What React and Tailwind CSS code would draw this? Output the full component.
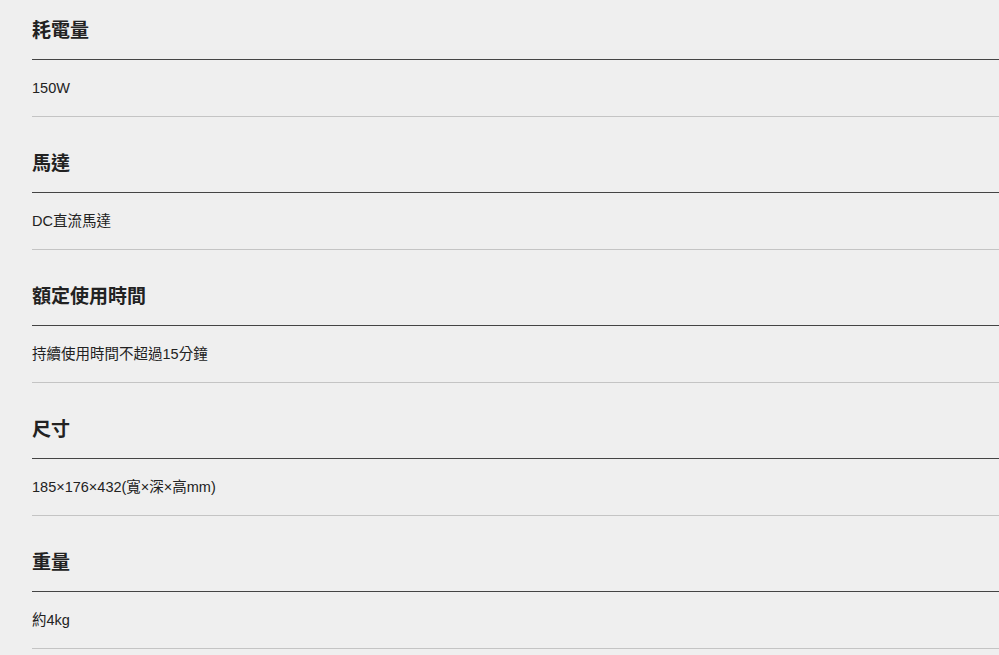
const rows = [
  ["耗電量", "150W"],
  ["馬達", "DC直流馬達"],
  ["額定使用時間", "持續使用時間不超過15分鐘"],
  ["尺寸", "185×176×432(寬×深×高mm)"],
  ["重量", "約4kg"],
];

export default function App() {
  return (
    <div className="min-h-[655px] w-full bg-[#efefef] pl-8 overflow-hidden">
      <div className="w-[1000px] mt-[-16px]">
        {rows.map(([h, v]) => (
          <div key={h} className="mt-4">
            <div
              className="pt-[15px] pb-[17px] border-b border-[#444444] text-[19px] leading-[27px] font-bold text-[#222222]"
              style={{ fontFamily: '"Noto Sans CJK TC", "Liberation Sans", sans-serif' }}
            >
              {h}
            </div>
            <div
              className="py-[19px] border-b border-[#c4c4c4] text-[14.5px] leading-[18px] text-[#222222]"
              style={{ fontFamily: '"Liberation Sans", "Noto Sans CJK TC", sans-serif' }}
            >
              {v}
            </div>
          </div>
        ))}
      </div>
    </div>
  );
}
